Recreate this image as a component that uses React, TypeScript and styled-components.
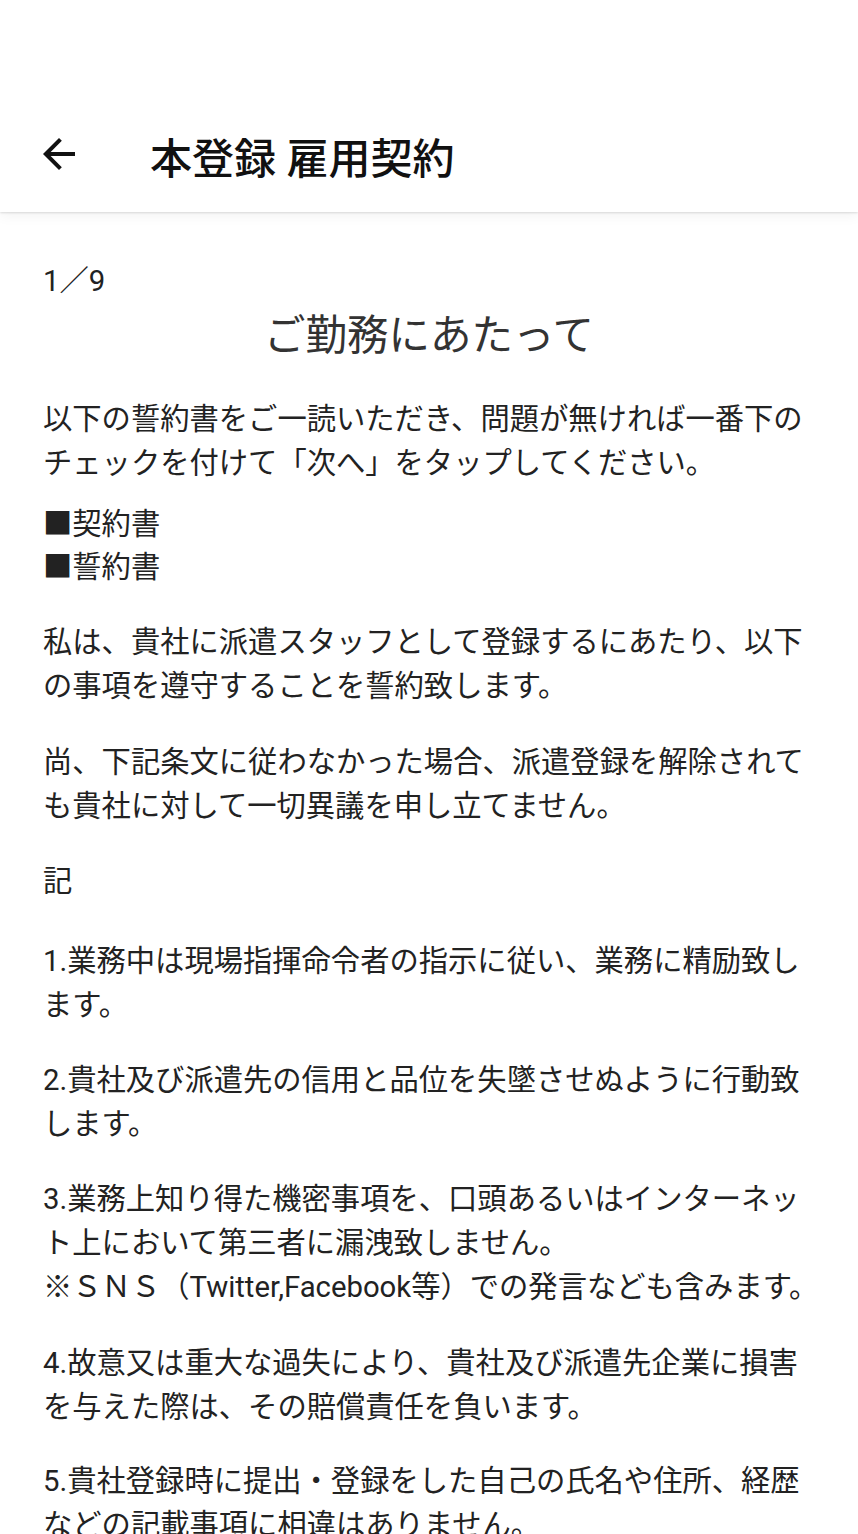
import React from "react";
import styled, { createGlobalStyle } from "styled-components";

type Clause = {
  text: string;
  note?: string;
};

const clauses: Clause[] = [
  { text: "1.業務中は現場指揮命令者の指示に従い、業務に精励致します。" },
  { text: "2.貴社及び派遣先の信用と品位を失墜させぬように行動致します。" },
  {
    text: "3.業務上知り得た機密事項を、口頭あるいはインターネット上において第三者に漏洩致しません。",
    note: "※ＳＮＳ（Twitter,Facebook等）での発言なども含みます。",
  },
  { text: "4.故意又は重大な過失により、貴社及び派遣先企業に損害を与えた際は、その賠償責任を負います。" },
  { text: "5.貴社登録時に提出・登録をした自己の氏名や住所、経歴などの記載事項に相違はありません。" },
];

const clauseSpace = [36, 31, 32, 32, 31];

const GlobalStyle = createGlobalStyle`
  html, body {
    margin: 0;
    padding: 0;
    background: #ffffff;
  }
  body {
    font-family: Roboto, "Noto Sans CJK JP", sans-serif;
    -webkit-font-smoothing: antialiased;
  }
`;

const Page = styled.div`
  width: 858px;
  min-height: 1534px;
  background: #ffffff;
`;

const Header = styled.header`
  position: relative;
  z-index: 1;
  padding-top: 108px;
  background: #ffffff;
  box-shadow: 0 1px 2px rgba(0, 0, 0, 0.12), 0 4px 12px rgba(0, 0, 0, 0.05);
`;

const Toolbar = styled.div`
  height: 104px;
  display: flex;
  align-items: center;
  padding-left: 35px;
`;

const BackButton = styled.button`
  width: 48px;
  height: 48px;
  margin-top: -12px;
  padding: 0;
  border: none;
  background: none;
  color: #111111;
  display: flex;
  align-items: center;
  justify-content: center;
  cursor: pointer;

  svg {
    width: 48px;
    height: 48px;
    display: block;
  }
`;

const HeaderTitle = styled.h1`
  margin: 0 0 0 67px;
  font-size: 42px;
  font-weight: 500;
  line-height: 1;
  color: #111111;
`;

const Content = styled.main`
  padding: 47px 34px 60px 43px;
  color: #222222;
  font-size: 29.3px;
  line-height: 43.8px;
`;

const Counter = styled.div`
  line-height: 44px;
`;

const Title = styled.h2`
  margin: 4px 9px 0 0;
  font-size: 41.5px;
  font-weight: 400;
  line-height: 58px;
  text-align: center;
  color: #333333;
`;

const Paragraph = styled.p<{ $space: number }>`
  margin: ${(p) => p.$space}px 0 0;
`;

const Line = styled.span`
  display: block;
`;

const ArrowBack = () => (
  <svg viewBox="0 0 24 24" aria-hidden="true">
    <path
      fill="currentColor"
      d="M20 11H7.83l5.59-5.59L12 4l-8 8 8 8 1.41-1.41L7.83 13H20v-2z"
    />
  </svg>
);

export default function App() {
  return (
    <Page>
      <GlobalStyle />
      <Header>
        <Toolbar>
          <BackButton aria-label="戻る">
            <ArrowBack />
          </BackButton>
          <HeaderTitle>本登録 雇用契約</HeaderTitle>
        </Toolbar>
      </Header>
      <Content>
        <Counter>1／9</Counter>
        <Title>ご勤務にあたって</Title>
        <Paragraph $space={33}>
          以下の誓約書をご一読いただき、問題が無ければ一番下のチェックを付けて「次へ」をタップしてください。
        </Paragraph>
        <Paragraph $space={17}>
          <Line>■契約書</Line>
          <Line>■誓約書</Line>
        </Paragraph>
        <Paragraph $space={31}>
          私は、貴社に派遣スタッフとして登録するにあたり、以下の事項を遵守することを誓約致します。
        </Paragraph>
        <Paragraph $space={32}>
          尚、下記条文に従わなかった場合、派遣登録を解除されても貴社に対して一切異議を申し立てません。
        </Paragraph>
        <Paragraph $space={32}>記</Paragraph>
        {clauses.map((c, i) => (
          <Paragraph key={i} $space={clauseSpace[i]}>
            <Line>{c.text}</Line>
            {c.note && <Line>{c.note}</Line>}
          </Paragraph>
        ))}
      </Content>
    </Page>
  );
}
